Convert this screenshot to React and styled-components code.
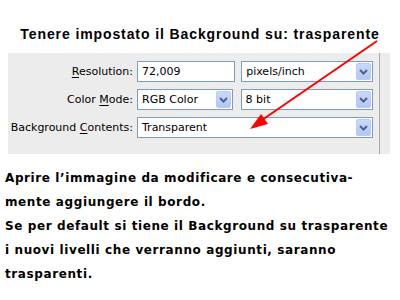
import React from 'react'
import styled, { createGlobalStyle } from 'styled-components'

const GlobalStyle = createGlobalStyle`
  html, body {
    margin: 0;
    padding: 0;
    background: #ffffff;
  }
`

const Page = styled.div`
  position: relative;
  width: 400px;
  height: 300px;
  overflow: hidden;
  background: #ffffff;
`

const Title = styled.h1`
  margin: 0;
  padding-top: 26px;
  height: 27px;
  text-align: center;
  font-family: "Liberation Sans", Arial, sans-serif;
  font-weight: 700;
  font-size: 14px;
  letter-spacing: 0.9px;
  color: #000;
`

const Panel = styled.div`
  display: flex;
  margin-left: 8px;
  width: 382px;
  height: 101px;
  background: #ececec;
`

const Form = styled.div`
  display: grid;
  grid-template-columns: 129px 236px;
  grid-auto-rows: 21px;
  row-gap: 7px;
  align-items: center;
  padding-top: 8px;
  width: 370px;
  font-family: "DejaVu Sans", Tahoma, sans-serif;
  font-size: 11px;
  color: #000;
`

const Divider = styled.div`
  width: 1px;
  margin-left: 1px;
  background: #a7a6aa;
`

const Label = styled.div`
  text-align: right;
  padding-right: 4px;
  white-space: nowrap;
  u {
    text-decoration: underline;
    text-underline-offset: 2px;
  }
`

const Controls = styled.div`
  display: flex;
  gap: ${p => p.gap || 6}px;
  height: 21px;
`

const TextBox = styled.div`
  box-sizing: border-box;
  width: ${p => p.w}px;
  height: 21px;
  border: 1px solid #7f9db9;
  background: #fff;
  padding-left: 4px;
  display: flex;
  align-items: center;
`

const Select = styled(TextBox)`
  justify-content: space-between;
  padding-right: 1px;
`

const DropButton = styled.div`
  width: 15px;
  height: 17px;
  border-radius: 2px;
  background: linear-gradient(#c9d8fc, #b3c7f5);
  border: 1px solid #b9cbf3;
  box-sizing: border-box;
  display: flex;
  align-items: center;
  justify-content: center;
`

const Body = styled.div`
  padding: 12px 0 0 5px;
  font-family: "DejaVu Sans", Verdana, sans-serif;
  font-weight: 700;
  font-size: 12px;
  letter-spacing: 0.6px;
  color: #000;
`

const Line = styled.div`
  height: 24px;
  line-height: 24px;
  white-space: nowrap;
`

const Overlay = styled.svg`
  position: absolute;
  left: 0;
  top: 0;
  pointer-events: none;
`

const Chevron = () => (
  <svg width="9" height="6" viewBox="0 0 9 6">
    <path d="M1 1 L4.5 4.5 L8 1" fill="none" stroke="#4d6185" strokeWidth="2" />
  </svg>
)

const Dropdown = ({ w, children }) => (
  <Select w={w}>
    <span>{children}</span>
    <DropButton><Chevron /></DropButton>
  </Select>
)

export default function App() {
  return (
    <Page>
      <GlobalStyle />
      <Title>Tenere impostato il Background su: trasparente</Title>
      <Panel>
        <Form>
          <Label><u>R</u>esolution:</Label>
          <Controls>
            <TextBox w={99}>72,009</TextBox>
            <Dropdown w={133}>pixels/inch</Dropdown>
          </Controls>
          <Label>Color <u>M</u>ode:</Label>
          <Controls gap={8}>
            <Dropdown w={96}>RGB Color</Dropdown>
            <Dropdown w={133}>8 bit</Dropdown>
          </Controls>
          <Label>Background <u>C</u>ontents:</Label>
          <Controls>
            <Dropdown w={237}>Transparent</Dropdown>
          </Controls>
        </Form>
        <Divider />
      </Panel>
      <Body>
        <Line>Aprire l’immagine da modificare e consecutiva-</Line>
        <Line>mente aggiungere il bordo.</Line>
        <Line>Se per default si tiene il Background su trasparente</Line>
        <Line>i nuovi livelli che verranno aggiunti, saranno</Line>
        <Line>trasparenti.</Line>
      </Body>
      <Overlay width="400" height="300" viewBox="0 0 400 300">
        <line x1="377" y1="41" x2="262" y2="120" stroke="#ff0000" strokeWidth="2" />
        <polygon points="250,129 268,124 261,114" fill="#ff0000" />
      </Overlay>
    </Page>
  )
}
